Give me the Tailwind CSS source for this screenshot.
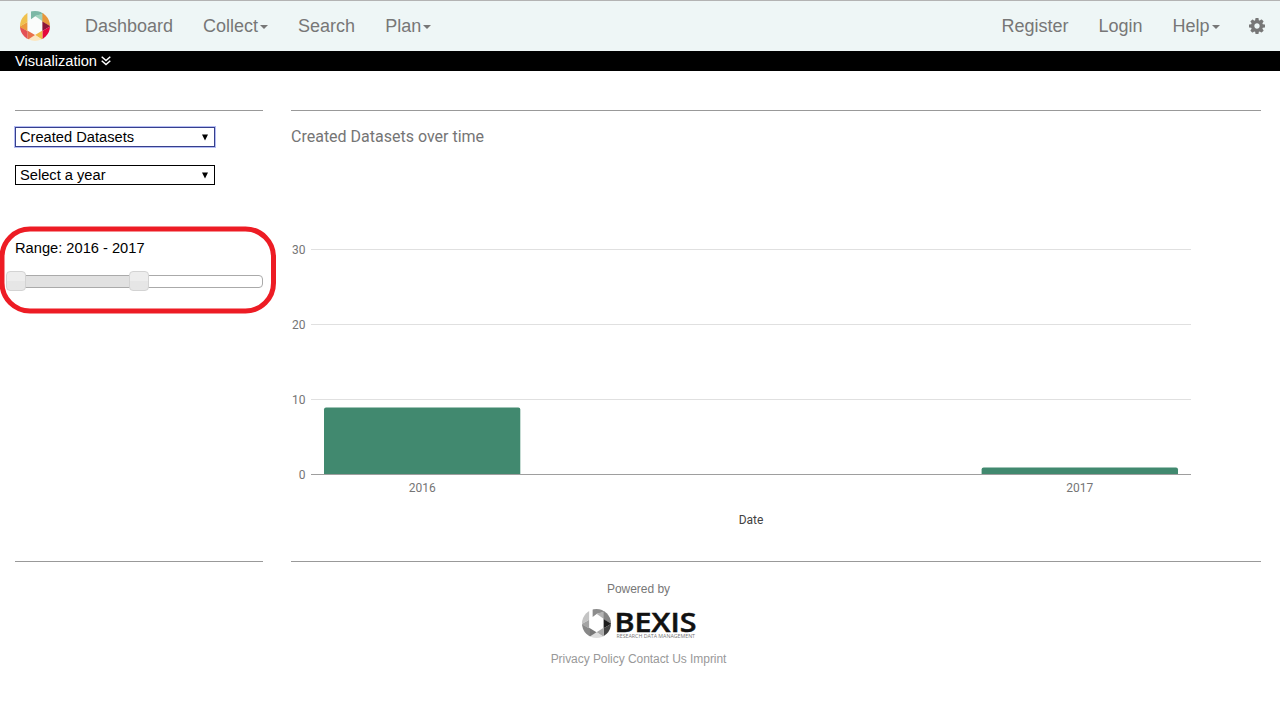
<!DOCTYPE html>
<html lang="en">
<head>
<meta charset="utf-8">
<title>Visualization</title>
<script src="https://cdn.jsdelivr.net/npm/@tailwindcss/browser@4"></script>
</head>
<body class="h-[701px] overflow-hidden bg-white font-['Liberation_Sans',Arial,sans-serif] text-[14.67px] text-black">
<nav class="flex h-[51px] items-center border-t border-[#b3b3b3] bg-[#eef6f6] text-lg text-[#777]">
  <a class="ml-5 block size-[30px]">
    <svg viewBox="0 0 30 30" class="size-[30px] rounded-full">
      <path d="M7.4 11V20L15 25L22.4 20V10L15 5L11 7.5z" fill="#fafcfb"/>
      <path d="M11 0H20L23.5 3L15.5 5L11 8.200z" fill="#7cb8a6"/>
      <path d="M23 2.500V10.500L15 5z" fill="#a0d3bd"/>
      <path d="M22.400 0L31 5V15.500L22.400 11z" fill="#e8963a"/>
      <path d="M22.400 10.500L30.500 15.300L22.400 20z" fill="#8c1538"/>
      <path d="M31 15V30H22.400V20z" fill="#e4063c"/>
      <path d="M22.400 19.500V29L15 24z" fill="#efb944"/>
      <path d="M15 23.700L23 29L15 31L7 29z" fill="#fbe6c0"/>
      <path d="M7.400 19.500L15 24L7.400 29z" fill="#e9704a"/>
      <path d="M-1 15L7.400 20V30H-1z" fill="#e35056"/>
      <path d="M7.400 11L-1 15.700L7.400 20z" fill="#eb9a3d"/>
      <path d="M7.400 0V11L-1 16V0z" fill="#f0c14d"/>
    </svg>
  </a>
  <div class="ml-[35px] flex gap-[30px]">
    <a>Dashboard</a>
    <a class="flex items-center">Collect<i class="ml-0.5 mt-0.5 border-x-4 border-t-4 border-x-transparent border-t-[#777]"></i></a>
    <a>Search</a>
    <a class="flex items-center">Plan<i class="ml-0.5 mt-0.5 border-x-4 border-t-4 border-x-transparent border-t-[#777]"></i></a>
  </div>
  <div class="ml-auto mr-[15px] flex items-center gap-[30px]">
    <a>Register</a>
    <a>Login</a>
    <a class="flex items-center">Help<i class="ml-0.5 mt-0.5 border-x-4 border-t-4 border-x-transparent border-t-[#777]"></i></a>
    <svg viewBox="0 0 1536 1536" class="-ml-[0.5px] size-[16px]" fill="#777"><path d="M1024 768q0-106-75-181t-181-75-181 75-75 181 75 181 181 75 181-75 75-181zm512-109v222q0 12-8 23t-20 13l-185 28q-19 54-39 91 35 50 107 138 10 12 10 25t-9 23q-27 37-99 108t-94 71q-12 0-26-9l-138-108q-44 23-91 38-16 136-29 186-7 28-36 28H657q-14 0-24.500-8.500T621 1506l-28-184q-49-16-90-37l-141 107q-10 9-25 9-14 0-25-11-126-114-165-168-7-10-7-23 0-12 8-23 15-21 51-66.500t54-70.500q-27-50-41-99L29 913q-13-2-21-12.500T0 877V655q0-12 8-23t19-13l186-28q14-46 39-92-40-57-107-138-10-12-10-24 0-10 9-23 26-36 98.500-107.500T337 135q13 0 26 10l138 107q44-23 91-38 16-136 29-186 7-28 36-28h222q14 0 24.500 8.500T915 30l28 184q49 16 90 37l142-107q9-9 24-9 13 0 25 10 129 119 165 170 7 8 7 22 0 12-8 23-15 21-51 66.500t-54 70.500q26 50 41 98l183 28q13 2 21 12.500t8 23.500z"/></svg>
  </div>
</nav>
<div class="flex h-5 items-center bg-black pl-[15px] text-white">
  <span>Visualization</span>
  <svg viewBox="0 0 10 10" class="ml-1 size-2.5" fill="none" stroke="#fff" stroke-width="1.5"><path d="M.7 .8L5 4.600L9.300 .8M.7 4.800L5 8.600L9.300 4.800"/></svg>
</div>
<main class="flex gap-7 pl-[15px] pt-[39px]">
  <aside class="h-[452px] w-[248px] border-y border-[#999]">
    <div class="mt-4 flex h-5 w-[200px] items-center justify-between border border-[#36408c] pl-1 pr-[5px] shadow-[0_0_0_1px_#b4bcf4]">
      <span>Created Datasets</span>
      <svg viewBox="0 0 8 7" class="h-[7px] w-2"><path d="M1 .5H7L4 6.500z"/></svg>
    </div>
    <div class="mt-[18px] flex h-5 w-[200px] items-center justify-between border border-black pl-1 pr-[5px]">
      <span>Select a year</span>
      <svg viewBox="0 0 8 7" class="h-[7px] w-2"><path d="M1 .5H7L4 6.500z"/></svg>
    </div>
    <section class="relative mt-[52px]">
      <svg class="absolute -left-[17px] -top-[12px]" width="280" height="90" fill="none" stroke="#ed1c24" stroke-width="5"><rect x="4" y="4" width="271.500" height="82" rx="28"/></svg>
      <p class="h-[22px] leading-[22px]">Range: 2016 - 2017</p>
      <div class="relative mt-4 h-[13px] w-[248px] rounded-[4px] border border-[#aaa]">
        <div class="h-full w-[123px] bg-[#e1e1e1]"></div>
        <i class="absolute -left-[10px] -top-[5px] size-5 rounded-[4px] border border-[#d3d3d3] bg-linear-to-b from-[#ededed] from-50% to-[#e6e6e6] to-50%"></i>
        <i class="absolute left-[113px] -top-[5px] size-5 rounded-[4px] border border-[#d3d3d3] bg-linear-to-b from-[#ededed] from-50% to-[#e6e6e6] to-50%"></i>
      </div>
    </section>
  </aside>
  <section class="h-[452px] w-[970px] border-y border-[#999]">
    <svg class="block font-[Roboto,sans-serif]" width="970" height="450" viewBox="291 111 970 450" font-size="12" fill="#757575">
      <text x="291" y="142" font-size="16">Created Datasets over time</text>
      <g fill="#e0e0e0">
        <rect x="311" y="249" width="880" height="1"/>
        <rect x="311" y="324" width="880" height="1"/>
        <rect x="311" y="399" width="880" height="1"/>
      </g>
      <g fill="#41896f">
        <path d="M324 474.500V409.500a2 2 0 0 1 2-2H518.300a2 2 0 0 1 2 2V474.500z"/>
        <path d="M981.600 474.500V469.500a2 2 0 0 1 2-2H1176a2 2 0 0 1 2 2V474.500z"/>
      </g>
      <rect x="311" y="474" width="880" height="1" fill="#9e9e9e"/>
      <g text-anchor="end">
        <text x="305.500" y="254">30</text>
        <text x="305.500" y="329">20</text>
        <text x="305.500" y="404">10</text>
        <text x="305.500" y="479">0</text>
      </g>
      <g text-anchor="middle">
        <text x="422.300" y="492">2016</text>
        <text x="1079.700" y="492">2017</text>
        <text x="751" y="524" fill="#424242">Date</text>
      </g>
    </svg>
  </section>
</main>
<footer class="flex w-[1277px] flex-col items-center text-xs text-[#999]">
  <p class="mt-[19px] leading-4 tracking-[-0.03px] text-[#777]">Powered by</p>
  <div class="mt-3 flex h-[30px] w-[114px]">
    <svg viewBox="0 0 30 30" class="size-[29px] shrink-0 rounded-full">
      <path d="M11 0H20L23.500 3L15.500 5L11 8.200z" fill="#8c8c8c"/>
      <path d="M23 2.500V10.500L15 5z" fill="#b4b4b4"/>
      <path d="M22.400 0L31 5V15.500L22.400 11z" fill="#858585"/>
      <path d="M22.400 10.500L30.500 15.300L22.400 20z" fill="#1c1c1c"/>
      <path d="M31 15V30H22.400V20z" fill="#444"/>
      <path d="M22.400 19.500V29L15 24z" fill="#aaa"/>
      <path d="M15 23.700L23 29L15 31L7 29z" fill="#ddd"/>
      <path d="M7.400 19.500L15 24L7.400 29z" fill="#777"/>
      <path d="M-1 15L7.400 20V30H-1z" fill="#888"/>
      <path d="M7.400 11L-1 15.700L7.400 20z" fill="#a4a4a4"/>
      <path d="M7.400 0V11L-1 16V0z" fill="#c4c4c4"/>
    </svg>
    <svg viewBox="0 0 81 30" class="ml-1 h-[30px] w-[81px] overflow-visible" font-family="Open Sans, sans-serif">
      <text x="-.5" y="22.500" font-size="27" font-weight="600" fill="#111" stroke="#111" stroke-width=".5" textLength="82" lengthAdjust="spacingAndGlyphs">BEXIS</text>
      <text x="1.500" y="28.700" font-size="5.200" fill="#777" textLength="78.500" lengthAdjust="spacingAndGlyphs">RESEARCH DATA MANAGEMENT</text>
    </svg>
  </div>
  <p class="mt-3 leading-4 tracking-[-0.05px]">Privacy Policy Contact Us Imprint</p>
</footer>
</body>
</html>
